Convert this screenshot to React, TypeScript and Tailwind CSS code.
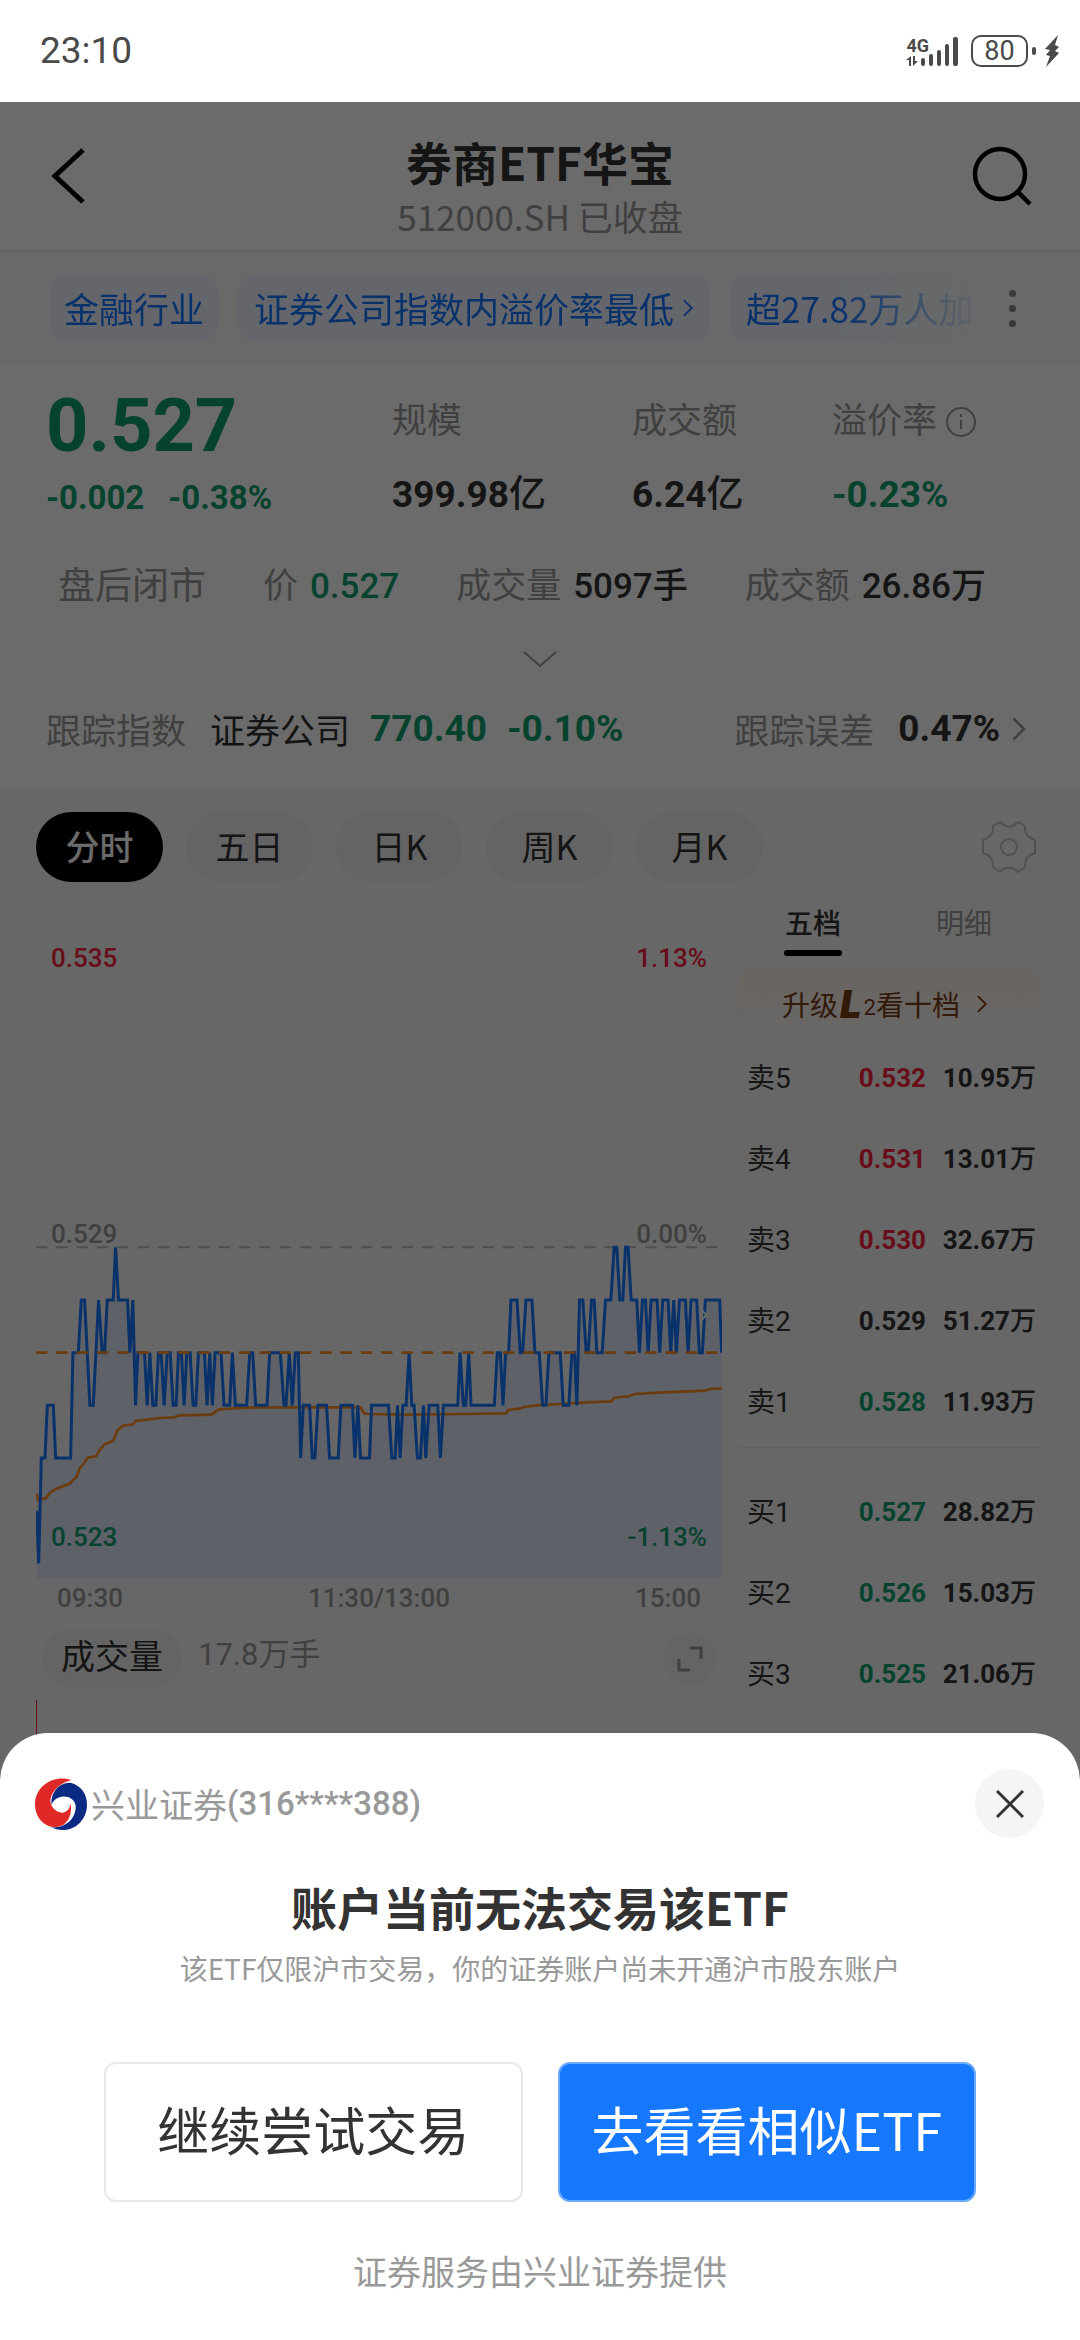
import { useState } from 'react'
import clsx from 'clsx'

type Tone = 'up' | 'down' | 'flat'

interface Quote {
  label: string
  price: string
  volume: string
  tone: Tone
}

const sells: Quote[] = [
  { label: '卖5', price: '0.532', volume: '10.95万', tone: 'up' },
  { label: '卖4', price: '0.531', volume: '13.01万', tone: 'up' },
  { label: '卖3', price: '0.530', volume: '32.67万', tone: 'up' },
  { label: '卖2', price: '0.529', volume: '51.27万', tone: 'flat' },
  { label: '卖1', price: '0.528', volume: '11.93万', tone: 'down' },
]

const buys: Quote[] = [
  { label: '买1', price: '0.527', volume: '28.82万', tone: 'down' },
  { label: '买2', price: '0.526', volume: '15.03万', tone: 'down' },
  { label: '买3', price: '0.525', volume: '21.06万', tone: 'down' },
]

const periods = ['分时', '五日', '日K', '周K', '月K']

// [x, price step below 0.529]
const price: [number, number][] = [
  [2, 5], [8, 6], [16, 4], [27, 4], [34, 3], [52, 3], [59, 4], [104, 4], [111, 2], [127, 2],
  [136, 1], [146, 1], [162, 3], [172, 3], [188, 1], [199, 2], [206, 2], [214, 1], [232, 1], [239, 0],
  [248, 1], [275, 1], [282, 2], [291, 1], [299, 3], [306, 2], [326, 2], [334, 3], [342, 2], [351, 3],
  [360, 3], [368, 2], [376, 2], [385, 3], [394, 2], [403, 2], [412, 3], [421, 3], [428, 2], [437, 2],
  [445, 3], [453, 2], [463, 2], [472, 3], [480, 3], [488, 2], [506, 2], [514, 3], [522, 2], [530, 3],
  [538, 2], [556, 2], [565, 3], [582, 3], [590, 2], [599, 3], [633, 3], [642, 2], [651, 2], [660, 3],
  [694, 3], [702, 2], [734, 2], [745, 3], [751, 3], [761, 2], [770, 3], [779, 2], [788, 2], [795, 4],
  [803, 3], [822, 3], [830, 4], [838, 4], [847, 3], [873, 3], [882, 4], [908, 4], [916, 3], [951, 3],
  [958, 4], [967, 3], [975, 4], [1002, 4], [1008, 3], [1059, 3], [1069, 4], [1079, 4], [1086, 3], [1094, 4],
  [1102, 3], [1112, 3], [1121, 2], [1129, 3], [1136, 3], [1146, 4], [1155, 4], [1164, 3], [1171, 4], [1181, 3],
  [1207, 3], [1215, 4], [1224, 3], [1267, 3], [1274, 2], [1284, 3], [1291, 3], [1300, 2], [1307, 3], [1377, 3],
  [1386, 2], [1395, 2], [1403, 3], [1411, 2], [1420, 2], [1427, 1], [1445, 1], [1455, 2], [1462, 2], [1472, 1],
  [1490, 1], [1499, 2], [1512, 2], [1522, 3], [1532, 3], [1541, 2], [1575, 2], [1584, 3], [1601, 3], [1610, 2],
  [1618, 2], [1625, 3], [1633, 1], [1643, 1], [1653, 2], [1659, 2], [1669, 1], [1677, 1], [1685, 2], [1701, 2],
  [1711, 1], [1727, 1], [1737, 0], [1745, 0], [1754, 1], [1763, 1], [1771, 0], [1779, 0], [1788, 1], [1805, 1],
  [1813, 2], [1822, 1], [1831, 1], [1839, 2], [1848, 1], [1866, 1], [1874, 2], [1883, 1], [1899, 1], [1907, 2],
  [1916, 1], [1924, 2], [1933, 1], [1951, 1], [1959, 2], [1968, 1], [1985, 1], [1993, 2], [2002, 2], [2011, 1],
  [2054, 1], [2060, 2],
]

const average =
  '2,1733 7,1753 13,1750 30,1746 45,1728 60,1719 103,1702 112,1691 122,1683 130,1659 146,1639 155,1625 180,1621 ' +
  '190,1604 207,1584 232,1574 245,1543 260,1529 292,1525 299,1515 335,1511 368,1506 415,1504 430,1498 527,1496 ' +
  '550,1480 595,1477 655,1474 975,1474 985,1491 995,1494 1105,1496 1275,1494 1412,1492 1420,1481 1453,1478 ' +
  '1465,1473 1505,1468 1575,1464 1655,1459 1728,1456 1738,1445 1780,1441 1800,1434 1875,1430 2010,1424 2025,1419 2060,1417'

const stepY = (step: number) => 994 + step * 158
const pricePoints = price.map(([x, step]) => `${x},${stepY(step)}`).join(' ')

function toneClass(tone: Tone) {
  if (tone === 'up') return 'text-[#f5223f]'
  if (tone === 'down') return 'text-[#10a070]'
  return 'text-[#333333]'
}

function Chevron({ className }: { className?: string }) {
  return (
    <svg viewBox="0 0 14 24" fill="none" stroke="currentColor" strokeWidth="2.5" className={className}>
      <path d="M1.5 1.5 12 12 1.5 22.5" />
    </svg>
  )
}

function StatusBar() {
  return (
    <div className="flex h-[102px] items-center justify-between bg-white pl-10 pr-5 text-[#4a4a4a]">
      <span className="font-[Roboto] text-[37px]">23:10</span>
      <div className="flex items-center gap-3">
        <div className="flex items-end">
          <div className="flex flex-col font-[Roboto] text-[18px] leading-5 font-bold">
            4G
            <svg viewBox="0 0 12 10" className="h-2.5 w-3" fill="currentColor">
              <path d="M5 0v10H3V4H0zM7 0v10l5-5H9V0z" />
            </svg>
          </div>
          <svg viewBox="0 0 38 30" className="-ml-2 h-[30px] w-[38px]" fill="currentColor">
            <rect x="0" y="22" width="4" height="8" rx="2" />
            <rect x="8" y="18" width="4" height="12" rx="2" />
            <rect x="16" y="14" width="4" height="16" rx="2" />
            <rect x="24" y="8" width="4" height="22" rx="2" />
            <rect x="32" y="1" width="5" height="29" rx="2" />
          </svg>
        </div>
        <div className="flex items-center gap-1">
          <div className="flex h-8 w-[57px] items-center justify-center rounded-[10px] border-2 border-current font-[Roboto] text-[27px]">
            80
          </div>
          <div className="h-2 w-1 rounded-sm bg-current" />
          <svg viewBox="0 0 16 32" className="ml-1 h-8 w-4" fill="currentColor">
            <path d="M14 0 1 14l5 1-4 5 4 1-4 11 13-14-4-2 4-4-4-2z" />
          </svg>
        </div>
      </div>
    </div>
  )
}

function Header() {
  return (
    <header className="flex h-[150px] items-center justify-between border-b-2 border-[#eeeeee] bg-white px-12">
      <button aria-label="返回" className="flex w-16 items-center text-black">
        <svg viewBox="0 0 40 60" className="h-[60px] w-10" fill="none" stroke="currentColor" strokeWidth="5">
          <path d="M35 4 7 30l28 26" />
        </svg>
      </button>
      <div className="pt-5 text-center">
        <h1 className="text-[46px] leading-[60px] font-bold text-[#333333]">券商ETF华宝</h1>
        <p className="text-[35px] leading-[50px] text-[#999999]">512000.SH 已收盘</p>
      </div>
      <button aria-label="搜索" className="flex w-16 justify-end text-black">
        <svg viewBox="0 0 60 60" className="h-[60px] w-[60px]" fill="none" stroke="currentColor" strokeWidth="4.5">
          <circle cx="28" cy="28" r="25" />
          <path d="m45 45 13 13" />
        </svg>
      </button>
    </header>
  )
}

function Tags() {
  return (
    <div className="flex h-28 items-center bg-[#fafafa] pr-16 pl-[50px]">
      <div className="flex flex-1 gap-5 overflow-hidden text-[35px] whitespace-nowrap text-[#1677ff] [mask-image:linear-gradient(to_right,black_84%,transparent)]">
        <span className="flex h-[66px] shrink-0 items-center rounded-2xl bg-[#eef4ff] px-3.5">金融行业</span>
        <button className="flex h-[66px] shrink-0 items-center gap-2 rounded-2xl bg-[#eef4ff] px-4">
          证券公司指数内溢价率最低
          <Chevron className="h-[18px] w-3" />
        </button>
        <span className="flex h-[66px] shrink-0 items-center rounded-2xl bg-[#eef4ff] px-4">超27.82万人加</span>
      </div>
      <button aria-label="更多" className="ml-6 flex flex-col gap-2">
        <span className="size-[7px] rounded-full bg-[#888888]" />
        <span className="size-[7px] rounded-full bg-[#888888]" />
        <span className="size-[7px] rounded-full bg-[#888888]" />
      </button>
    </div>
  )
}

function Summary() {
  return (
    <section className="bg-white px-[46px] pt-4 text-[35px] whitespace-nowrap text-[#333333]">
      <div className="grid grid-cols-[346px_240px_200px_1fr] font-[Roboto,'Noto_Sans_CJK_SC',sans-serif]">
        <div className="font-bold text-[#10a070]">
          <div className="text-[74px] leading-[92px]">0.527</div>
          <div className="flex gap-6 text-[33px] leading-[52px]">
            <span>-0.002</span>
            <span>-0.38%</span>
          </div>
        </div>
        <div>
          <div className="pt-3.5 leading-[56px] text-[#999999]">规模</div>
          <div className="pt-3 text-[37px] leading-[66px]"><b>399.98</b><span className="font-medium">亿</span></div>
        </div>
        <div>
          <div className="pt-3.5 leading-[56px] text-[#999999]">成交额</div>
          <div className="pt-3 text-[37px] leading-[66px]"><b>6.24</b><span className="font-medium">亿</span></div>
        </div>
        <div>
          <div className="flex items-center gap-2 pt-3.5 leading-[56px] text-[#999999]">
            溢价率
            <svg viewBox="0 0 32 32" className="size-8" fill="none" stroke="currentColor" strokeWidth="2">
              <circle cx="16" cy="16" r="14" />
              <path d="M16 14v9M16 8v3" />
            </svg>
          </div>
          <div className="pt-3 text-[37px] leading-[66px] font-bold text-[#10a070]">-0.23%</div>
        </div>
      </div>

      <div className="flex items-center justify-between pt-8 pr-12 pl-3 leading-[54px] font-medium font-[Roboto,'Noto_Sans_CJK_SC',sans-serif]">
        <span className="text-[37px] font-normal text-[#999999]">盘后闭市</span>
        <span className="flex gap-3"><span className="font-normal text-[#999999]">价</span><span className="text-[#10a070]">0.527</span></span>
        <span className="flex gap-3"><span className="font-normal text-[#999999]">成交量</span>5097手</span>
        <span className="flex gap-3"><span className="font-normal text-[#999999]">成交额</span>26.86万</span>
      </div>

      <button aria-label="展开" className="mx-auto mt-9 flex h-5 w-9 justify-center text-[#999999]">
        <svg viewBox="0 0 36 20" className="h-5 w-9" fill="none" stroke="currentColor" strokeWidth="2">
          <path d="m2 2 16 14L34 2" />
        </svg>
      </button>

      <div className="flex items-center pt-8 pb-8 leading-[54px]">
        <span className="text-[#999999]">跟踪指数</span>
        <span className="ml-6">证券公司</span>
        <span className="ml-5 font-[Roboto] text-[37px] font-bold text-[#10a070]">770.40</span>
        <span className="ml-5 font-[Roboto] text-[37px] font-bold text-[#10a070]">-0.10%</span>
        <span className="ml-auto text-[#999999]">跟踪误差</span>
        <span className="ml-6 font-[Roboto] text-[37px] font-bold">0.47%</span>
        <Chevron className="mr-2 ml-3 h-6 w-3.5 text-[#999999]" />
      </div>
    </section>
  )
}

function PeriodTabs() {
  const [active, setActive] = useState('分时')
  return (
    <div className="flex items-center gap-[23px] px-9 pt-6">
      {periods.map((p) => (
        <button
          key={p}
          onClick={() => setActive(p)}
          className={clsx(
            'h-[70px] w-[127px] rounded-full pb-1 text-[34px]',
            p === active ? 'bg-black font-medium text-white' : 'bg-[#eeeeee] text-[#333333]',
          )}
        >
          {p}
        </button>
      ))}
      <button aria-label="图表设置" className="mr-2 ml-auto text-[#c0c0c0]">
        <svg viewBox="0 0 54 52" className="h-[52px] w-[54px]" fill="none" stroke="currentColor" strokeWidth="2" strokeLinejoin="round">
          <path d="M18 1q9 9 18 0l7 4q-1 11 10 14v13q-11 3-10 14l-7 5q-9-9-18 0l-7-5q1-11-10-14V19q11-3 10-14z" />
          <circle cx="27" cy="26" r="8" />
        </svg>
      </button>
    </div>
  )
}

function TimeChart() {
  return (
    <div className="min-w-0 flex-1 pt-[34px] font-[Roboto,'Noto_Sans_CJK_SC',sans-serif] text-[26px] font-medium">
      <div className="relative h-[662px]">
        <svg viewBox="0 0 2061 1986" preserveAspectRatio="none" className="h-full w-full" fill="none">
          <polygon points={`2,1986 ${pricePoints} 2060,1986`} fill="#1f5fff" fillOpacity="0.1" />
          <path d="M0 994H2061" stroke="#bbbbbb" strokeWidth="6" strokeDasharray="34 27" />
          <polyline points={average} stroke="#ff8f1f" strokeWidth="8" />
          <polyline points={pricePoints} stroke="#1677ff" strokeWidth="9" />
          <path d="M0 1310H2061" stroke="#ff8f1f" strokeWidth="8" strokeDasharray="34 27" />
          <path d="m1996 1178 18 19-18 20" stroke="#ffffff" strokeWidth="6" />
        </svg>
        <div className="absolute inset-x-0 top-[23px] flex justify-between px-[15px] text-[#f5223f]">
          <span>0.535</span><span>1.13%</span>
        </div>
        <div className="absolute inset-x-0 top-[299px] flex justify-between px-[15px] text-[#999999]">
          <span>0.529</span><span>0.00%</span>
        </div>
        <div className="absolute inset-x-0 bottom-[21px] flex justify-between px-[15px] text-[#10a070]">
          <span>0.523</span><span>-1.13%</span>
        </div>
      </div>
      <div className="flex justify-between px-[21px] leading-10 text-[#999999]">
        <span>09:30</span><span>11:30/13:00</span><span>15:00</span>
      </div>
      <div className="mt-3 flex items-center px-1.5">
        <button className="h-[58px] rounded-full bg-[#eeeeee] px-[19px] pb-1 text-[34px] font-normal text-[#333333]">成交量</button>
        <span className="ml-4 pb-2 text-[31px] font-normal text-[#999999]">17.8万手</span>
        <button aria-label="放大" className="ml-auto flex size-[52px] items-center justify-center rounded-full bg-[#eeeeee] text-[#999999]">
          <svg viewBox="0 0 26 26" className="size-[26px]" fill="none" stroke="currentColor" strokeWidth="3">
            <path d="M13 2h11v11M2 13v11h11" />
          </svg>
        </button>
      </div>
      <div className="mt-3 h-40 border-l border-[#f5223f]" />
    </div>
  )
}

function QuoteRows({ rows }: { rows: Quote[] }) {
  return (
    <tbody>
      {rows.map((q) => (
        <tr key={q.label} className="h-[81px]">
          <th className="pl-[9px] text-left text-[28px] font-normal text-[#333333]">{q.label}</th>
          <td className={clsx('pr-4 text-right font-bold', toneClass(q.tone))}>{q.price}</td>
          <td className="w-[98px] pr-1 text-right font-bold text-[#333333]">
            {q.volume.slice(0, -1)}<span className="font-medium">万</span>
          </td>
        </tr>
      ))}
    </tbody>
  )
}

function OrderBook() {
  const [tab, setTab] = useState('五档')
  return (
    <div className="w-[302px] shrink-0">
      <div className="grid grid-cols-[150px_1fr]">
        {['五档', '明细'].map((t) => (
          <button key={t} onClick={() => setTab(t)} className="flex flex-col items-center pt-5 text-[28px] leading-10">
            <span className={t === tab ? 'font-medium text-[#333333]' : 'text-[#999999]'}>{t}</span>
            <span className={clsx('mt-2 h-1.5 w-[58px] rounded-full', t === tab && 'bg-black')} />
          </button>
        ))}
      </div>
      <button className="mt-3 flex h-[60px] w-full items-center rounded-t-2xl bg-linear-to-b from-[#fdeee4] to-[#f6f6f6] pt-3 pl-11 text-[28px] text-[#7a3d14]">
        升级
        <span className="px-0.5 font-[Inter] text-[38px] leading-none font-black italic">L</span>
        <span className="pt-2 font-[Roboto] text-[22px] leading-none">2</span>
        看十档
        <Chevron className="ml-4 h-[18px] w-3" />
      </button>
      <table className="mt-2.5 w-full font-[Roboto,'Noto_Sans_CJK_SC',sans-serif] text-[26px] whitespace-nowrap">
        <QuoteRows rows={sells} />
      </table>
      <hr className="mt-1 mb-6 border-[#e8e8e8]" />
      <table className="w-full font-[Roboto,'Noto_Sans_CJK_SC',sans-serif] text-[26px] whitespace-nowrap">
        <QuoteRows rows={buys} />
      </table>
    </div>
  )
}

function BrokerLogo() {
  return (
    <svg viewBox="0 0 156 156" className="size-[52px]">
      <path
        fill="#e02826"
        d="M110 6C60-12 0 22 0 78c0 44 32 72 66 69 32-4 46-35 41-71-3 22-19 32-33 27-16-5-28-19-28-37C50 38 76 14 110 6z"
      />
      <path
        fill="#0b2a82"
        d="M106 14c34 8 50 36 50 66 0 42-32 76-72 76-14 0-26-3-36-8 42 4 76-26 74-64-2-20-22-30-40-28-18 2-28 12-32 24-4-30 16-66 56-66z"
      />
    </svg>
  )
}

function TradeSheet() {
  return (
    <div role="dialog" aria-labelledby="sheet-title" className="absolute inset-x-0 bottom-0 rounded-t-[48px] bg-white pt-9 text-center">
      <div className="flex items-center pr-9 pl-[35px] text-[34px] text-[#999999]">
        <BrokerLogo />
        <span className="ml-1">兴业证券</span>
        <span className="font-[Roboto] text-[33px] font-medium">(316****388)</span>
        <button aria-label="关闭" className="ml-auto flex size-[69px] items-center justify-center rounded-full bg-[#f5f5f5] text-[#333333]">
          <svg viewBox="0 0 28 28" className="size-7" fill="none" stroke="currentColor" strokeWidth="3">
            <path d="m1 1 26 26M27 1 1 27" />
          </svg>
        </button>
      </div>
      <h2 id="sheet-title" className="mt-9 text-[46px] leading-[64px] font-bold text-[#333333]">账户当前无法交易该ETF</h2>
      <p className="mt-2.5 text-[28px] leading-10 text-[#999999]">该ETF仅限沪市交易，你的证券账户尚未开通沪市股东账户</p>
      <div className="mt-[74px] flex gap-[35px] px-[104px] text-[52px]">
        <button className="h-[140px] flex-1 rounded-xl border-2 border-[#e8e8e8] pb-1.5 text-[#333333]">继续尝试交易</button>
        <button className="h-[140px] flex-1 rounded-xl border-2 border-[#69a9ff] bg-[#1677ff] pb-1.5 text-white">去看看相似ETF</button>
      </div>
      <p className="pt-11 pb-11 text-[34px] leading-[50px] text-[#999999]">证券服务由兴业证券提供</p>
    </div>
  )
}

export default function App() {
  return (
    <div className="flex min-h-screen flex-col font-['Noto_Sans_CJK_SC',sans-serif]">
      <StatusBar />
      <div className="relative flex-1 bg-[#f5f5f5]">
        <Header />
        <Tags />
        <Summary />
        <PeriodTabs />
        <div className="flex gap-4 pr-10 pl-9">
          <TimeChart />
          <OrderBook />
        </div>
        <div className="absolute inset-0 bg-black/58" />
        <TradeSheet />
      </div>
    </div>
  )
}
